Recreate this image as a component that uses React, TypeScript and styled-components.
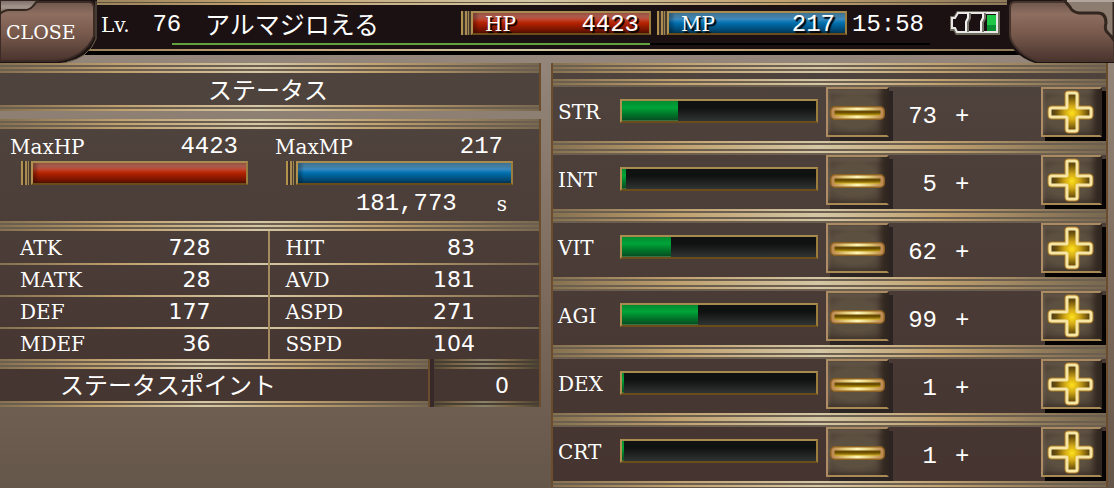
import React from "react";
import styled, { createGlobalStyle, css } from "styled-components";

const GlobalStyle = createGlobalStyle`
  * { box-sizing: border-box; }
  body {
    margin: 0;
    background: #65564a;
    color: #fff;
    font-family: "DejaVu Serif", "Noto Sans CJK JP", serif;
    font-size: 20px;
    line-height: 24px;
  }
`;

const metal = "linear-gradient(to right, #857150, #bfa06e 22%, #d4c7a5 48%, #c0a16f 70%, #76674f)";
const brass = "#a88b4e #9a7c3c #6b4d1c #b0914f";

const Page = styled.div`
  min-height: 100vh;
  background: linear-gradient(#94867b 55px, #7c6b5c 60%, #65564a);
`;

const Header = styled.header`
  position: relative;
  padding-top: 6px;
  background:
    ${metal} 0 0 / 100% 2px no-repeat,
    linear-gradient(#5f5340, #5f5340) 0 2px / 100% 1px no-repeat,
    ${metal} 0 3px / 100% 2px no-repeat,
    #1b1112;
`;

const HeaderRow = styled.div`
  display: flex;
  align-items: center;
  height: 37px;
  padding: 0 113px 4px 101px;
`;

const ExpTrack = styled.div`
  height: 2px;
  margin: 0 184px 4px 172px;
  background: #000;
`;

const ExpFill = styled.div`
  height: 2px;
  background: #62a13c;
`;

const HeaderEdge = styled.div`
  height: 6px;
  border-bottom: 4px solid #000;
  background: ${metal};
`;

const Num = styled.span<{ $plain?: boolean }>`
  font: ${(p) => (p.$plain ? '22px/24px "DejaVu Sans", sans-serif' : '24px/24px "Liberation Mono", monospace')};
`;

const Level = styled.div`
  display: flex;
  flex: none;
  width: 104px;
  padding-top: 4px;
`;

const LevelLabel = styled.span`
  width: 37px;
`;

const Name = styled.h1`
  flex: 1;
  margin: 0;
  font: 400 25px/24px "Noto Sans CJK JP", sans-serif;
  white-space: nowrap;
`;

const Clock = styled.time`
  width: 103px;
  padding: 4px 0 0 5px;
  font: 24px/24px "Liberation Mono", monospace;
`;

const CloseButton = styled.button`
  position: absolute;
  z-index: 1;
  top: 0;
  left: 0;
  width: 98px;
  height: 63px;
  padding: 0 0 0 6px;
  border: 0;
  background: none;
  color: #fff;
  font: 19px/24px "DejaVu Serif", serif;
  text-align: left;
  cursor: pointer;
  svg { position: absolute; inset: 0; }
  span { position: relative; }
`;

const RightCorner = styled.div`
  position: absolute;
  z-index: 1;
  top: 0;
  right: 0;
  width: 107px;
  height: 63px;
`;

const Gauge = styled.div<{ $compact?: boolean }>`
  display: flex;
  height: 24px;
  padding-left: 10px;
  background: linear-gradient(to right, #b1924e 0 2px, #3c3028 2px 4px, #a98c4f 4px 6px, #504335 6px 7px, #a08450 7px 8px, #463a2d 8px 10px, transparent 10px);
  ${(p) => p.$compact && css`width: 190px; flex: none; & + & { margin-left: 6px; }`}
`;

const GaugeFill = styled.div<{ $tone: "red" | "blue" }>`
  display: flex;
  flex: 1;
  justify-content: space-between;
  padding: 0 10px 0 12px;
  border: 2px solid;
  border-color: ${brass};
  background: ${(p) =>
    p.$tone === "red"
      ? "linear-gradient(#a8594a 0 20%, #c04a35 30%, #b52200 50%, #8c1800 72%, #5b1100)"
      : "linear-gradient(#427da3 0 20%, #3a8bc0 30%, #006fae 50%, #005688 72%, #003a5c)"};
  box-shadow: inset 4px 0 3px rgba(0, 0, 0, 0.25);
  line-height: 22px;
  text-shadow: 2px 2px 1px #000;
`;

const Columns = styled.main`
  display: grid;
  grid-template-columns: 541fr 557fr;
  gap: 10px;
  align-items: start;
  padding: 8px 6px 0 0;
`;

const Panel = styled.section`
  border-right: 2px solid #6b4c2d;
  background: linear-gradient(#4f433d, #453430);
`;

const TitlePanel = styled(Panel)`
  margin-bottom: 8px;
  background: #4e433d;
`;

const AttributePanel = styled(Panel)`
  border-left: 2px solid #6b4c2d;
`;

const Rail = styled.div<{ $h: number }>`
  height: ${(p) => p.$h}px;
  background: repeating-linear-gradient(transparent 0 2px, #6d5f50 2px 4px), ${metal};
`;

const DimRail = styled(Rail)`
  filter: brightness(0.65);
`;

const Title = styled.h2`
  margin: 0;
  padding-left: 208px;
  font: 400 24px/32px "Noto Sans CJK JP", sans-serif;
`;

const Vitals = styled.div`
  display: grid;
  grid-template-columns: 265px 1fr;
  height: 92px;
  padding-top: 6px;
`;

const Vital = styled.div`
  width: 248px;
  padding-left: 10px;
`;

const VitalHead = styled.div`
  display: flex;
  justify-content: space-between;
  height: 26px;
  padding-right: 10px;
`;

const VitalGauge = styled.div`
  padding-left: 11px;
`;

const Timer = styled.div`
  display: flex;
  justify-content: flex-end;
  gap: 40px;
  padding: 7px 6px 0 0;
`;

const StatTable = styled.table`
  width: 100%;
  border-collapse: separate;
  border-spacing: 0;
  table-layout: fixed;
  th, td { height: 32px; padding: 2px 0 0 20px; font-weight: 400; text-align: left; }
  th:nth-child(3) { padding-left: 16px; }
  td { padding: 2px 0 0; text-align: right; }
  td:nth-child(2) { padding-right: 57px; border-right: 2px solid #a58c60; }
  td:nth-child(4) { padding-right: 64px; }
  tr + tr { background: ${metal} top / 100% 2px no-repeat; }
`;

const Points = styled.div`
  display: flex;
`;

const PointsPart = styled.div<{ $fixed?: boolean }>`
  ${(p) => (p.$fixed ? "width: 109px; border-left: 4px solid #37292a;" : "flex: 1; border-right: 2px solid #6b4c2d;")}
  background: #463631;
`;

const PointsText = styled.div<{ $end?: boolean }>`
  height: 32px;
  padding: ${(p) => (p.$end ? "5px 30px 0 0" : "0 0 0 60px")};
  font: 400 24px/30px "Noto Sans CJK JP", sans-serif;
  text-align: ${(p) => (p.$end ? "right" : "left")};
  span { display: block; }
`;

const Lead = styled.div`
  height: 6px;
`;

const AttrRow = styled.div`
  display: flex;
  align-items: flex-start;
  height: 54px;
  padding: 0 4px 0 5px;
`;

const AttrLabel = styled.span`
  width: 62px;
  padding-top: 13px;
`;

const AttrBar = styled.div`
  flex: 1;
  height: 24px;
  margin: 12px 8px 0 0;
  border: 2px solid;
  border-color: ${brass};
  background: linear-gradient(#101211 0 35%, #303432);
`;

const AttrFill = styled.div`
  height: 20px;
  border-bottom: 1px solid #3b7043;
  background: linear-gradient(#008b30, #00a438 35%, #00752a 70%, #075020);
`;

const AttrValue = styled.output`
  width: 48px;
  padding-top: 17px;
  text-align: right;
`;

const AttrBonus = styled.span`
  width: 104px;
  padding: 17px 0 0 18px;
`;

const StepButton = styled.button<{ $dark?: boolean }>`
  width: ${(p) => (p.$dark ? 61 : 63)}px;
  height: 50px;
  padding: 0;
  border: 2px solid;
  border-color: #aa8a60 #2f2620 #a98a55 #ae8d66;
  background: radial-gradient(ellipse at 45% 50%, #5c5041 50%, #44372f 100%);
  box-shadow: 4px 4px 0 ${(p) => (p.$dark ? "#050303" : "#2b2422")}, inset -6px 0 6px #30261f, inset 0 3px 4px #80715f;
  cursor: pointer;
  svg { display: block; margin: 0 auto; }
`;

const Minus = () => (
  <svg width="57" height="46" viewBox="0 0 57 46" aria-hidden="true">
    <defs>
      <linearGradient id="mg" x2="0" y2="1">
        <stop offset="0" stopColor="#5a4500" />
        <stop offset=".45" stopColor="#6b4e00" />
        <stop offset="1" stopColor="#f2ce20" />
      </linearGradient>
      <linearGradient id="ms" gradientUnits="userSpaceOnUse" x1="4" x2="53">
        <stop offset="0" stopColor="#bf8b55" />
        <stop offset=".25" stopColor="#e3cb78" />
        <stop offset=".5" stopColor="#fff6b8" />
        <stop offset=".75" stopColor="#e3cb78" />
        <stop offset="1" stopColor="#bf8b55" />
      </linearGradient>
    </defs>
    <rect x="2" y="18" width="53" height="12" rx="4" fill="none" stroke="#8b6021" strokeWidth="2" />
    <rect x="4" y="20" width="49" height="8" rx="2" fill="url(#mg)" stroke="url(#ms)" strokeWidth="3" />
  </svg>
);

const plusPath = "M24 5Q24 4 25 4H32Q34 4 34 6V18Q34 19 35 19H46Q48 19 48 21V26Q48 28 46 28H35Q34 28 34 29V40Q34 42 32 42H26Q24 42 24 40V29Q24 28 23 28H9Q7 28 7 26V21Q7 19 9 19H23Q24 19 24 18Z";

const Plus = () => (
  <svg width="57" height="46" viewBox="0 0 57 46" aria-hidden="true">
    <defs>
      <radialGradient id="pg" cx="29" cy="24" r="20" gradientUnits="userSpaceOnUse">
        <stop offset="0" stopColor="#ffe21c" />
        <stop offset=".35" stopColor="#d3aa16" />
        <stop offset=".8" stopColor="#6b500c" />
        <stop offset="1" stopColor="#544019" />
      </radialGradient>
    </defs>
    <path d={plusPath} fill="none" stroke="#a97a24" strokeWidth="5" />
    <path d={plusPath} fill="url(#pg)" stroke="#f7e5a4" strokeWidth="3" />
  </svg>
);

const Battery = () => (
  <svg width="51" height="24" viewBox="0 0 51 24" role="img" aria-label="battery">
    <path d="M8 2H48V22H7L5 18H2V7H5L8 2Z" fill="#1b1112" stroke="#6c6b5c" strokeWidth="4" />
    <path d="M8 2H47V21H7L5 17H2V7H5Z" fill="#1b1112" stroke="#e8e6e6" strokeWidth="2" />
    <path d="M19 2V7L17 11V21M34 2V7L32 11V21" fill="none" stroke="#77756b" strokeWidth="4" />
    <path d="M18 2V7L16 11V21M33 2V7L31 11V21" fill="none" stroke="#f2f0f0" strokeWidth="2" />
    <path d="M37 4H46V20H37Z" fill="#20c648" />
    <path d="M37 14H46V20H37Z" fill="#0b8f33" />
  </svg>
);

const LeftCornerArt = () => (
  <svg width="98" height="63" viewBox="0 0 98 63" aria-hidden="true">
    <defs>
      <linearGradient id="cl" x2="0" y2="1">
        <stop offset="0" stopColor="#6e564b" />
        <stop offset=".2" stopColor="#8d6e60" />
        <stop offset=".55" stopColor="#77594c" />
        <stop offset="1" stopColor="#49342d" />
      </linearGradient>
      <linearGradient id="cp" x2="0" y2="1">
        <stop offset="0" stopColor="#776b66" />
        <stop offset=".5" stopColor="#a4968c" />
        <stop offset="1" stopColor="#6c5a50" />
      </linearGradient>
    </defs>
    <path d="M0 0H97V38Q94 47 84 55Q74 62 60 63H0Z" fill="#1c1412" />
    <path d="M0 2H90Q94 3 94 8V36Q90 46 80 53Q70 60 56 61H0Z" fill="url(#cl)" stroke="#3b2a25" strokeWidth="2" />
    <path d="M96 1V39Q93 48 84 55Q77 60 67 62" fill="none" stroke="#716350" />
    <path d="M0 0H38L33 6Q30 10 24 10H9Q4 10 0 14Z" fill="url(#cp)" stroke="#33261f" strokeWidth="2" />
  </svg>
);

const RightCornerArt = () => (
  <svg width="107" height="63" viewBox="0 0 107 63" aria-hidden="true">
    <path d="M0 0H107V63H28Q12 58 4 46L0 36Z" fill="#1c1412" />
    <path d="M8 2H107V61H30Q16 56 8 46Q3 40 3 34V8Q3 2 8 2Z" fill="url(#cl)" stroke="#46342d" strokeWidth="2" />
    <path d="M57 0H107V40Q104 36 101 33Q97 30 99 23Q99 13 91 13H72Q65 12 63 7Z" fill="#8d7c70" stroke="#33261f" strokeWidth="3" />
    <path d="M60 1H107" stroke="#b3a69c" strokeWidth="2" />
  </svg>
);

type GaugeProps = { tone: "red" | "blue"; label: string; value: number; compact?: boolean };

const VitalBar = ({ tone, label, value, compact }: GaugeProps) => (
  <Gauge $compact={compact} role="meter" aria-label={label} aria-valuenow={value} aria-valuemin={0} aria-valuemax={value}>
    <GaugeFill $tone={tone}>
      {compact && (
        <>
          <span>{label}</span>
          <Num>{value}</Num>
        </>
      )}
    </GaugeFill>
  </Gauge>
);

const stats: [string, number, string, number][] = [
  ["ATK", 728, "HIT", 83],
  ["MATK", 28, "AVD", 181],
  ["DEF", 177, "ASPD", 271],
  ["MDEF", 36, "SSPD", 104],
];

const attributes: [string, number, number][] = [
  ["STR", 73, 29],
  ["INT", 5, 2],
  ["VIT", 62, 25],
  ["AGI", 99, 39],
  ["DEX", 1, 1],
  ["CRT", 1, 1],
];

export default function App() {
  return (
    <Page>
      <GlobalStyle />
      <Header>
        <CloseButton type="button">
          <LeftCornerArt />
          <span>CLOSE</span>
        </CloseButton>
        <HeaderRow>
          <Level>
            <LevelLabel>Lv.</LevelLabel>
            <Num>&nbsp;76</Num>
          </Level>
          <Name>アルマジロえる</Name>
          <VitalBar tone="red" label="HP" value={4423} compact />
          <VitalBar tone="blue" label="MP" value={217} compact />
          <Clock>15:58</Clock>
          <Battery />
        </HeaderRow>
        <ExpTrack>
          <ExpFill style={{ width: "63%" }} />
        </ExpTrack>
        <HeaderEdge />
        <RightCorner>
          <RightCornerArt />
        </RightCorner>
      </Header>
      <Columns>
        <div>
          <TitlePanel>
            <Rail $h={10} />
            <Title>ステータス</Title>
            <Rail $h={6} />
          </TitlePanel>
          <Panel>
            <Rail $h={10} />
            <Vitals>
              <Vital>
                <VitalHead>
                  <span>MaxHP</span>
                  <Num>4423</Num>
                </VitalHead>
                <VitalGauge>
                  <VitalBar tone="red" label="MaxHP" value={4423} />
                </VitalGauge>
              </Vital>
              <Vital>
                <VitalHead>
                  <span>MaxMP</span>
                  <Num>217</Num>
                </VitalHead>
                <VitalGauge>
                  <VitalBar tone="blue" label="MaxMP" value={217} />
                </VitalGauge>
                <Timer>
                  <Num>181,773</Num>
                  <span>s</span>
                </Timer>
              </Vital>
            </Vitals>
            <Rail $h={10} />
            <StatTable>
              <tbody>
                {stats.map(([a, av, b, bv]) => (
                  <tr key={a}>
                    <th scope="row">{a}</th>
                    <td><Num $plain>{av}</Num></td>
                    <th scope="row">{b}</th>
                    <td><Num $plain>{bv}</Num></td>
                  </tr>
                ))}
              </tbody>
            </StatTable>
            <Points>
              <PointsPart>
                <Rail $h={10} />
                <PointsText>ステータスポイント</PointsText>
                <Rail $h={6} />
              </PointsPart>
              <PointsPart $fixed>
                <DimRail $h={10} />
                <PointsText $end><Num $plain>0</Num></PointsText>
                <DimRail $h={6} />
              </PointsPart>
            </Points>
          </Panel>
        </div>
        <AttributePanel>
          <Rail $h={10} />
          <Lead />
          {attributes.map(([name, value, fill]) => (
            <React.Fragment key={name}>
              <Rail $h={8} />
              <AttrRow>
                <AttrLabel>{name}</AttrLabel>
                <AttrBar role="meter" aria-label={name} aria-valuenow={value} aria-valuemin={0} aria-valuemax={255}>
                  <AttrFill style={{ width: `${fill}%` }} />
                </AttrBar>
                <StepButton type="button" aria-label={`${name} minus`}><Minus /></StepButton>
                <AttrValue><Num>{value}</Num></AttrValue>
                <AttrBonus><Num>+</Num></AttrBonus>
                <StepButton type="button" $dark aria-label={`${name} plus`}><Plus /></StepButton>
              </AttrRow>
              <Rail $h={6} />
            </React.Fragment>
          ))}
        </AttributePanel>
      </Columns>
    </Page>
  );
}
